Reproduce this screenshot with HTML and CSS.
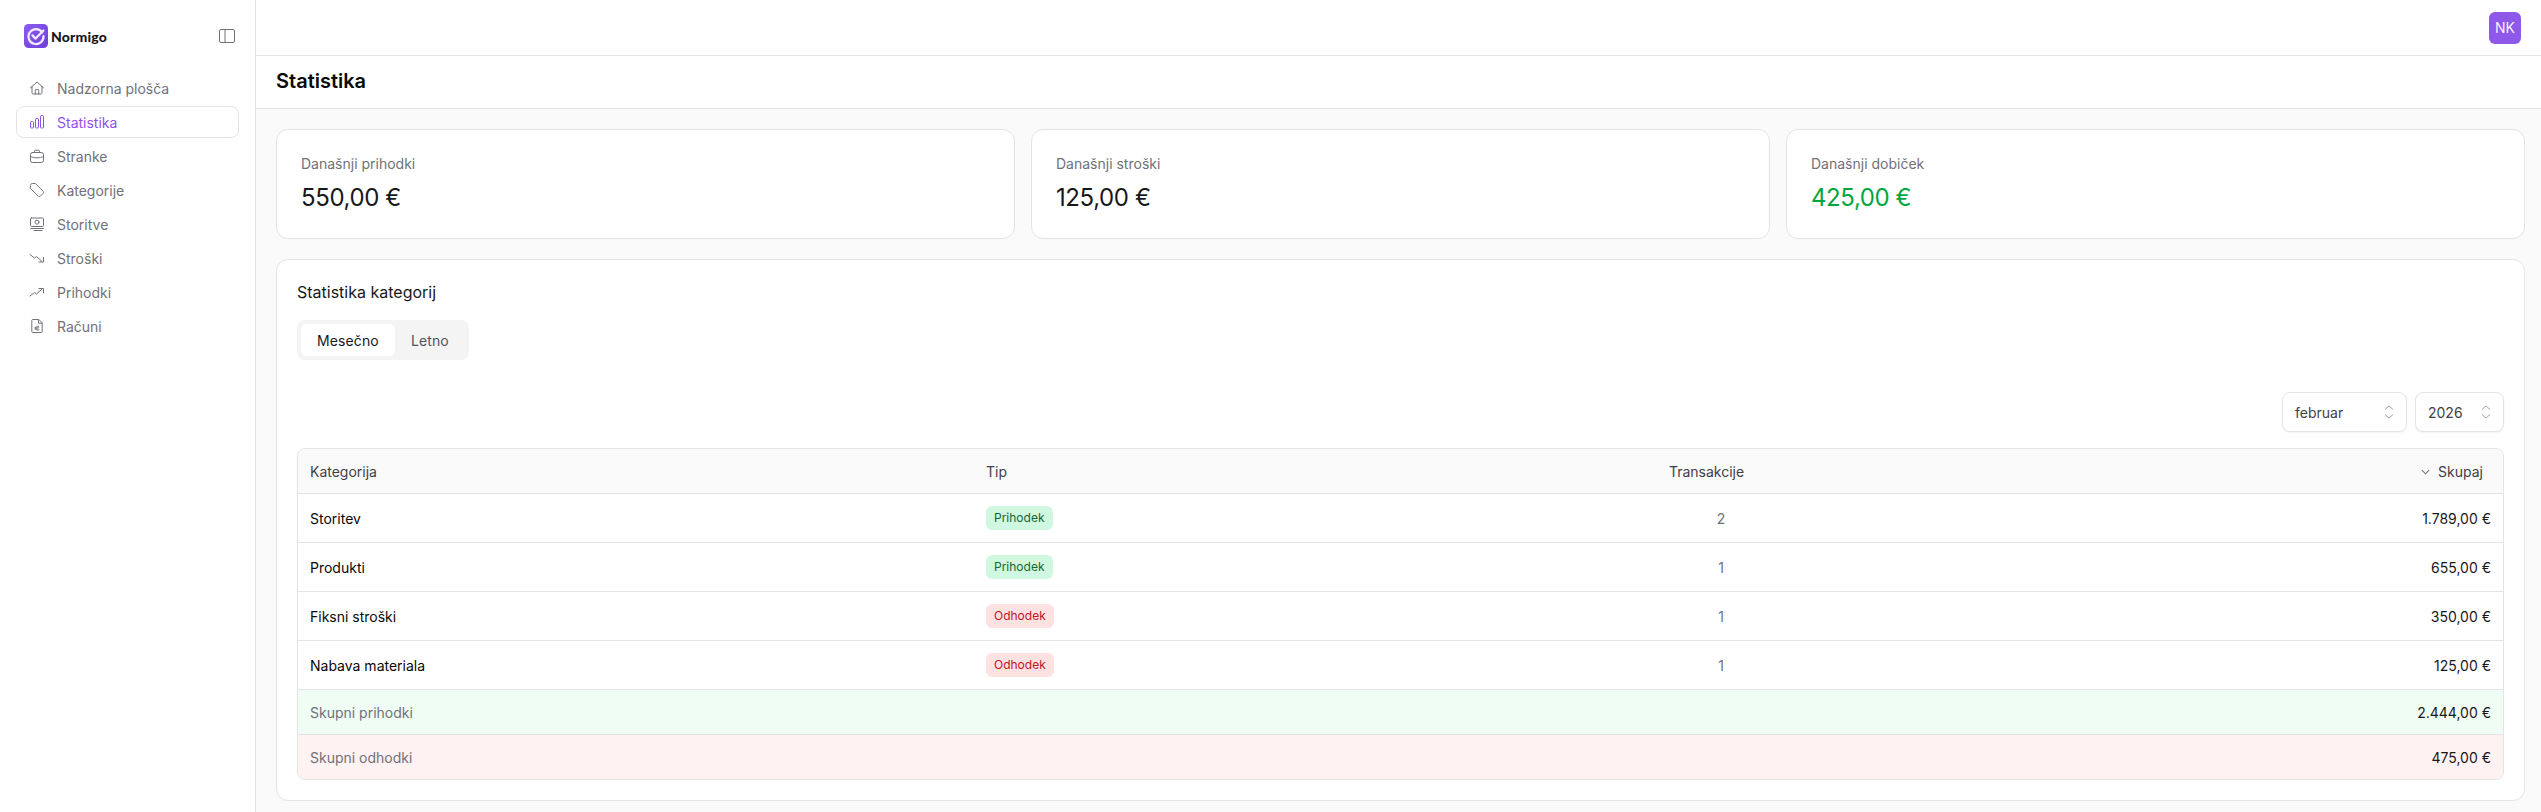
FILE: index.html
```html
<!DOCTYPE html>
<html lang="sl">
<head>
<meta charset="utf-8">
<title>Statistika</title>
<link rel="stylesheet" href="styles.css">
</head>
<body>
<div class="app">
  <aside class="sidebar">
    <div class="brand">
      <div class="logo">
        <svg class="logo-mark" viewBox="0 0 24 24"><defs><linearGradient id="lg" x1="0" y1="0" x2="1" y2="1"><stop offset="0" stop-color="#8b5cf0"/><stop offset="1" stop-color="#6f3fd8"/></linearGradient></defs><rect width="24" height="24" rx="4.5" fill="url(#lg)"/><path d="M18.200 8.300A7.500 7.500 0 1 0 19.500 12" fill="none" stroke="#f1eafd" stroke-width="2.200" stroke-linecap="round"/><path d="M8.400 11.400l3.200 3.200L19.400 6.500" fill="none" stroke="#f1eafd" stroke-width="2.200" stroke-linecap="round" stroke-linejoin="round"/></svg>
        <span class="logo-text">Normigo</span>
      </div>
      <svg class="toggle" viewBox="0 0 16 16"><rect x="0.5" y="1.500" width="15" height="13" rx="1.500"/><path d="M6 1.500v13"/></svg>
    </div>
    <nav class="nav">
      <a class="nav-item"><svg class="ico" viewBox="0 0 16 16"><path d="M1.500 7.800 8 2l6.500 5.800M3 6.500V12.800c0 .7.500 1.200 1.200 1.200h7.600c.7 0 1.200-.5 1.200-1.200V6.500M6.300 14V10.200c0-.4.300-.7.700-.7h2c.4 0 .7.300.7.700V14"/></svg>Nadzorna plošča</a>
      <a class="nav-item active"><svg class="ico" viewBox="0 0 16 16"><rect x="1.500" y="7.500" width="3" height="6.500" rx="1"/><rect x="6.500" y="4.500" width="3" height="9.500" rx="1"/><rect x="11.500" y="1.500" width="3" height="12.500" rx="1"/></svg>Statistika</a>
      <a class="nav-item"><svg class="ico" viewBox="0 0 16 16"><path d="M5.500 4.500V3.200c0-.6.400-1 1-1h3c.6 0 1 .4 1 1v1.300"/><rect x="1.500" y="4.500" width="13" height="10" rx="2"/><path d="M1.500 8.500c2 1 4.200 1.300 6.500 1.300s4.500-.3 6.500-1.300"/></svg>Stranke</a>
      <a class="nav-item"><svg class="ico" viewBox="0 0 16 16"><path d="M1.500 3.200c0-.9.800-1.700 1.700-1.700h3.200L14.200 9.300c.6.600.6 1.400 0 2L11.300 14.200c-.6.600-1.400.6-2 0L1.500 6.400z"/></svg>Kategorije</a>
      <a class="nav-item"><svg class="ico" viewBox="0 0 16 16"><rect x="1.500" y="2" width="13" height="8.500" rx="1"/><circle cx="8" cy="6.200" r="2"/><path d="M2 12.500h12.500M5 14.500h8"/></svg>Storitve</a>
      <a class="nav-item"><svg class="ico" viewBox="0 0 16 16"><path d="M1 4.500l4.500 3.500 2-1.500 5.500 5M14.500 7.500v4.500h-4.500"/></svg>Stroški</a>
      <a class="nav-item"><svg class="ico" viewBox="0 0 16 16"><path d="M1 12l4.500-3.500 2 1.500 5.500-5M10 4.500h4.500V9"/></svg>Prihodki</a>
      <a class="nav-item"><svg class="ico" viewBox="0 0 16 16"><path d="M9.500 1.500H3.800c-.6 0-1 .4-1 1v11c0 .6.400 1 1 1h8.400c.6 0 1-.4 1-1V5.200z"/><path d="M9.500 1.500v3.700h3.700M10 8.800a2 2 0 1 0 0 3M6 9.800h3M6 11h3"/></svg>Računi</a>
    </nav>
  </aside>
  <main class="main">
    <header class="topbar"><div class="avatar">NK</div></header>
    <div class="titlebar"><h1 class="title">Statistika</h1></div>
    <div class="content">
      <section class="kpis">
        <div class="card kpi"><div class="kpi-label">Današnji prihodki</div><div class="kpi-value">550,00 €</div></div>
        <div class="card kpi"><div class="kpi-label">Današnji stroški</div><div class="kpi-value">125,00 €</div></div>
        <div class="card kpi"><div class="kpi-label">Današnji dobiček</div><div class="kpi-value profit">425,00 €</div></div>
      </section>
      <section class="card panel">
        <h2 class="panel-title">Statistika kategorij</h2>
        <div class="tabs"><span class="tab on">Mesečno</span><span class="tab">Letno</span></div>
        <div class="filters">
          <div class="select month">februar<svg class="updown" viewBox="0 0 12 16"><path d="M2 5.500 6 2l4 3.500M2 10.500 6 14l4-3.500"/></svg></div>
          <div class="select year">2026<svg class="updown" viewBox="0 0 12 16"><path d="M2 5.500 6 2l4 3.500M2 10.500 6 14l4-3.500"/></svg></div>
        </div>
        <div class="table">
          <div class="tr head"><div>Kategorija</div><div>Tip</div><div class="c th-pad">Transakcije</div><div class="r th-end"><svg class="sort" viewBox="0 0 10 6"><path d="M1 1l4 4 4-4"/></svg>Skupaj</div></div>
          <div class="tr row"><div class="name">Storitev</div><div><span class="badge in">Prihodek</span></div><div class="c muted">2</div><div class="r amt">1.789,00 €</div></div>
          <div class="tr row"><div class="name">Produkti</div><div><span class="badge in">Prihodek</span></div><div class="c muted">1</div><div class="r amt">655,00 €</div></div>
          <div class="tr row"><div class="name">Fiksni stroški</div><div><span class="badge out">Odhodek</span></div><div class="c muted">1</div><div class="r amt">350,00 €</div></div>
          <div class="tr row"><div class="name">Nabava materiala</div><div><span class="badge out">Odhodek</span></div><div class="c muted">1</div><div class="r amt">125,00 €</div></div>
          <div class="tr total t-in"><div class="muted">Skupni prihodki</div><div></div><div></div><div class="r amt">2.444,00 €</div></div>
          <div class="tr total t-out"><div class="muted">Skupni odhodki</div><div></div><div></div><div class="r amt">475,00 €</div></div>
        </div>
      </section>
    </div>
  </main>
</div>
</body>
</html>
```
FILE: styles.css
```css
* { box-sizing: border-box; }
html, body { margin: 0; height: 100%; }
body { font-family: Inter, "Noto Sans", sans-serif; font-size: 14px; color: #18181b; background: #fff; }
.app { display: flex; height: 812px; overflow: hidden; }
.sidebar { width: 256px; flex: none; border-right: 1px solid #e4e4e7; background: #fff; padding: 24px 16px 0; }
.brand { display: flex; align-items: center; justify-content: space-between; height: 24px; padding: 0 4px 0 8px; }
.logo { display: flex; align-items: center; gap: 3px; }
.logo-mark { width: 24px; height: 24px; display: block; }
.logo-text { font-family: Lato, sans-serif; font-weight: 900; font-size: 14px; letter-spacing: .15px; color: #18181b; }
.toggle { width: 16px; height: 16px; fill: none; stroke: #71717a; stroke-width: 1; }
.nav { display: flex; flex-direction: column; gap: 2px; margin-top: 24px; }
.nav-item { display: flex; align-items: center; gap: 12px; height: 32px; padding: 0 12px; border: 1px solid transparent; border-radius: 8px; color: #71717a; }
.nav-item.active { color: #9150ee; border-color: #e4e4e7; }
.ico { width: 16px; height: 16px; flex: none; fill: none; stroke: currentColor; stroke-width: 1; stroke-linecap: round; stroke-linejoin: round; }
.main { flex: 1; min-width: 0; display: flex; flex-direction: column; }
.topbar { height: 56px; flex: none; border-bottom: 1px solid #e4e4e7; display: flex; align-items: center; justify-content: flex-end; padding: 0 20px 0 0; }
.avatar { width: 32px; height: 32px; border-radius: 6px; background: #8e58e8; color: #f5f0fe; font-size: 14px; font-weight: 400; display: flex; align-items: center; justify-content: center; }
.titlebar { height: 53px; flex: none; border-bottom: 1px solid #e4e4e7; display: flex; align-items: center; padding: 0 20px 2px; }
.title { margin: 0; font-size: 20px; font-weight: 600; color: #09090b; }
.content { flex: 1; background: #fafafa; padding: 20px 16px 0 20px; display: flex; flex-direction: column; gap: 20px; }
.card { background: #fff; border: 1px solid #e4e4e7; border-radius: 12px; }
.kpis { display: grid; grid-template-columns: repeat(3, 1fr); gap: 16px; }
.kpi { height: 110px; padding: 24px; }
.kpi-label { font-size: 14px; line-height: 20px; color: #71717a; }
.kpi-value { font-size: 24px; line-height: 32px; margin-top: 8px; color: #18181b; letter-spacing: -.4px; }
.kpi-value.profit { color: #00a63e; }
.panel { height: 542px; padding: 20px; }
.panel-title { margin: 0; font-size: 16px; line-height: 24px; font-weight: 400; color: #18181b; }
.tabs { display: inline-flex; margin-top: 16px; padding: 4px; background: #f4f4f5; border-radius: 8px; height: 40px; vertical-align: top; }
.tab { display: flex; align-items: center; padding: 0 16px; border-radius: 6px; color: #52525b; letter-spacing: .12px; }
.tab.on { background: #fff; color: #18181b; }
.filters { display: flex; justify-content: flex-end; gap: 8px; margin-top: 32px; height: 40px; }
.select { display: flex; align-items: center; justify-content: space-between; height: 40px; border: 1px solid #e4e4e7; border-radius: 8px; background: #fff; padding: 0 11px 0 12px; color: #3f3f46; box-shadow: 0 1px 2px rgba(0,0,0,.05); }
.month { width: 125px; }
.year { width: 89px; }
.updown { width: 12px; height: 16px; fill: none; stroke: #a1a1aa; stroke-width: 1; }
.table { margin-top: 16px; border: 1px solid #e4e4e7; border-radius: 8px; overflow: hidden; }
.tr { display: grid; grid-template-columns: 676px 516px 438px 1fr; align-items: center; padding: 0 12px; border-top: 1px solid #e4e4e7; }
.tr:first-child { border-top: 0; }
.head { height: 44px; background: #fafafa; color: #3f3f46; }
.row { height: 49px; }
.total { height: 45px; }
.t-in { background: #f0fdf4; }
.t-out { background: #fef2f2; }
.c { text-align: center; }
.r { text-align: right; }
.th-pad { padding-right: 29px; }
.th-end { padding-right: 8px; }
.name { color: #09090b; }
.muted { color: #71717a; }
.amt { color: #18181b; }
.sort { width: 9px; height: 6px; margin-right: 8px; vertical-align: 2px; fill: none; stroke: #71717a; stroke-width: 1.200; }
.badge { display: inline-block; font-size: 12px; line-height: 16px; padding: 4px 8px; border-radius: 6px; }
.badge.in { background: #d0f8e0; color: #166534; }
.badge.out { background: #fee2e2; color: #c1121f; }
```
